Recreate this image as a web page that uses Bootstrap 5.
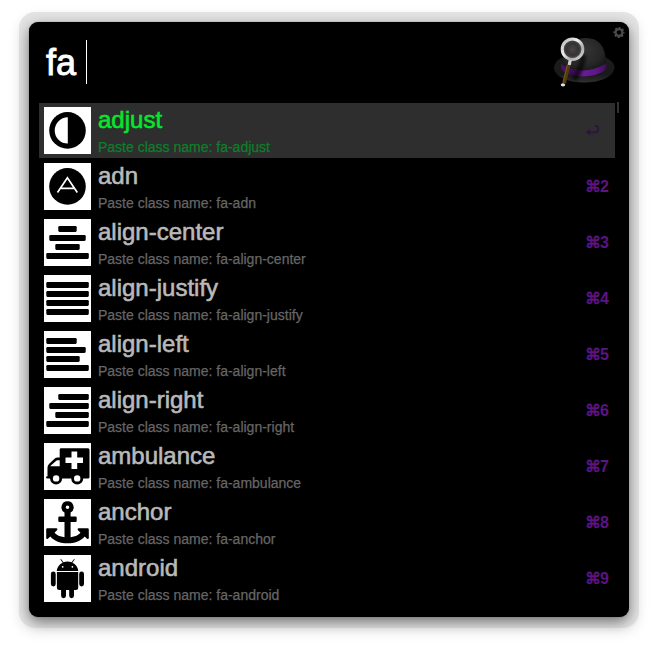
<!DOCTYPE html>
<html lang="en">
<head>
<meta charset="utf-8">
<meta name="viewport" content="width=device-width, initial-scale=1">
<title>Launcher</title>
<link href="https://cdn.jsdelivr.net/npm/bootstrap@5.3.0/dist/css/bootstrap.min.css" rel="stylesheet">
<style>
body{background:#fff;font-family:"Liberation Sans",Arial,sans-serif;padding:12px 16px 0 19px;height:651px;overflow:hidden}
.frame{width:620px;height:616px;padding:10px;border-radius:16px;background:#e4e4e4;box-shadow:0 4px 14px rgba(0,0,0,.07)}
.launcher{width:600px;height:595px;border-radius:9px;background:#000;box-shadow:0 0 1px #555,0 5px 14px rgba(0,0,0,.5);padding:0 14px 0 10px}
.query{height:81px;padding:18px 0 0 7px}
.query-text{font-size:36px;line-height:46px;color:#fff;white-space:pre;-webkit-text-stroke:.9px #fff}
.caret{width:1px;height:44px;background:#fff}
.hat{left:516px;top:3px}
.gear{left:584px;top:4px}
.scroll-thumb{left:588px;top:80px;width:2px;height:11px;background:#333}
.result{height:55px;margin-bottom:1px;padding:0 6px 0 5px;color:#b9b9b9}
.tile{width:47px;height:47px;background:#fff;flex:none}
.tile svg{display:block}
.result-text{padding:3px 0 0 7px}
.result-title{font-size:24px;line-height:28px;-webkit-text-stroke:.6px}
.result-sub{font-size:14px;line-height:18px;margin-top:4px;color:#666;-webkit-text-stroke:.25px}
.result.active{background:#2e2e2e;color:#05e62d}
.active .result-sub{color:#0c8029}
.key{font-size:16px;line-height:20px;color:#5c1483}
.cmd{font-family:"DejaVu Sans",sans-serif;font-size:16px;font-weight:400;-webkit-text-stroke:.7px;margin-right:-1px}
</style>
<script src="https://cdn.jsdelivr.net/npm/bootstrap@5.3.0/dist/js/bootstrap.bundle.min.js"></script>
</head>
<body>
<main class="frame">
<div class="launcher position-relative">
  <div class="query d-flex align-items-start">
    <span class="query-text">fa </span><span class="caret"></span>
    <svg class="hat position-absolute" width="80" height="70" viewBox="0 0 80 70">
      <defs>
        <radialGradient id="crown" cx=".45" cy=".35" r=".7"><stop offset="0" stop-color="#363636"/><stop offset=".65" stop-color="#262626"/><stop offset="1" stop-color="#111"/></radialGradient>
        <linearGradient id="brim" x2="0" y2="1"><stop offset="0" stop-color="#1d1d1d"/><stop offset=".7" stop-color="#191919"/><stop offset="1" stop-color="#303030"/></linearGradient>
        <linearGradient id="band"><stop offset="0" stop-color="#4b126c"/><stop offset=".25" stop-color="#3a0d55"/><stop offset=".5" stop-color="#6b1c98"/><stop offset=".8" stop-color="#5b1784"/><stop offset="1" stop-color="#3b0c57"/></linearGradient>
        <radialGradient id="lens"><stop offset="0" stop-color="#4a4547"/><stop offset=".6" stop-color="#343233"/><stop offset="1" stop-color="#5a5a5a"/></radialGradient>
        <linearGradient id="rim" x2="1" y2="1"><stop offset="0" stop-color="#b5b5b5"/><stop offset=".4" stop-color="#eee"/><stop offset=".7" stop-color="#aaa"/><stop offset="1" stop-color="#ddd"/></linearGradient>
        <filter id="soft" x="-50%" y="-50%" width="200%" height="200%"><feGaussianBlur stdDeviation="1.5"/></filter>
      </defs>
      <path d="M9 43C9 37 15 33 21 31H57C65 34 70 38 69.500 43C68 53 53 57.500 39 57.500S10 53 9 43Z" fill="url(#brim)"/>
      <path d="M18 43C17 28 23 13 41 13C54 13 60 22 60.500 33L61 43C51 50 29 50 18 43Z" fill="url(#crown)"/>
      <path d="M16 39Q38 52 61 38.500L61.500 43C55 54 22 54 16.500 44Z" fill="url(#band)"/>
      <path d="M38 30C39 40 32 49 29 55" stroke="#000" stroke-width="6" fill="none" opacity=".6" filter="url(#soft)"/>
      <circle cx="27.500" cy="24.200" r="10.300" fill="url(#lens)" stroke="url(#rim)" stroke-width="3"/>
      <path d="M25.300 35L24.200 40" stroke="#d0d0d0" stroke-width="3.200"/>
      <path d="M23.600 40L19.200 58" stroke="#523a0e" stroke-width="3.800"/>
      <path d="M22.400 40L18 58" stroke="#8b6526" stroke-width=".7"/>
      <ellipse cx="18" cy="59.800" rx="2.200" ry="1.600" fill="#e2e2e2"/>
    </svg>
    <svg class="gear position-absolute" width="12" height="13" viewBox="0 0 12 13">
      <circle cx="6" cy="6.500" r="3.400" fill="none" stroke="#4c4c4c" stroke-width="2.200"/>
      <circle cx="6" cy="6.500" r="4.800" fill="none" stroke="#4c4c4c" stroke-width="1.600" stroke-dasharray="2 1.770" stroke-dashoffset="1"/>
    </svg>
    <span class="scroll-thumb position-absolute"></span>
  </div>
  <div id="results"></div>
</div>
</main>
<script>
const bars = spans => spans.map(([a, b], i) =>
  `<rect x="${a}" y="${7 + 9 * i}" width="${b - a}" height="5.900" rx="1.300"/>`).join('');
const icons = {
  'adjust': '<circle cx="23.500" cy="23.400" r="18.300"/><path d="M23.800 10.300V36.500A13.100 13.100 0 0 1 23.800 10.300Z" fill="#fff"/>',
  'adn': '<circle cx="23.500" cy="23.400" r="18.300"/><path d="M13.500 29.500L23.400 14.800L33.300 29.500M17 25.300H29.800" fill="none" stroke="#fff" stroke-width="1.700"/>',
  'align-center': bars([[14.3, 32.7], [5.3, 41.7], [11.3, 35.7], [2.3, 44.8]]),
  'align-justify': bars([[2.3, 44.8], [2.3, 44.8], [2.3, 44.8], [2.3, 44.8]]),
  'align-left': bars([[2.3, 32.7], [2.3, 41.7], [2.3, 35.7], [2.3, 44.8]]),
  'align-right': bars([[14.3, 44.8], [5.3, 44.8], [11.3, 44.8], [2.3, 44.8]]),
  'ambulance': '<path d="M17 5.200H44Q45.500 5.200 45.500 6.700V34Q45.500 35.500 44 35.500H3.500Q2 35.500 2 34.300Q2 33.500 3.500 33.300V24.500Q3.500 22.500 5 21L10.500 15.700Q11.800 14.500 13.500 14.500H15.700V6.500Q15.700 5.200 17 5.200Z"/><path d="M6.400 23.200H15.700V17.300H13.500Q12.600 17.300 12 17.900L6.800 22.500ZM27.500 8.500H33.200V14.400H39V20.100H33.200V26H27.500V20.100H21.500V14.400H27.500Z" fill="#fff"/><circle cx="12.100" cy="35.400" r="6"/><circle cx="33.200" cy="35.400" r="6"/><circle cx="12.100" cy="35.400" r="3.200" fill="#fff"/><circle cx="33.200" cy="35.400" r="3.200" fill="#fff"/>',
  'anchor': '<path fill-rule="evenodd" d="M23.500 2.300A6 6 0 0 1 26.600 13.500V17.400H31.500Q32.700 17.400 32.700 18.600V21.700Q32.700 22.900 31.500 22.900H26.600V38.200Q33.500 37.200 36.500 33.700L33.800 31Q33.200 29.600 34.700 29.300H43.700Q44.800 29.300 44.800 30.400V39.300Q44.400 40.600 43.100 39.800L40.700 37.500C36.500 42.300 30.500 44.300 23.500 44.300S10.500 42.300 6.300 37.500L3.900 39.800Q2.600 40.600 2.200 39.300V30.400Q2.200 29.300 3.300 29.300H12.300Q13.800 29.600 13.200 31L10.500 33.700Q13.500 37.200 20.500 38.200V22.900H15.500Q14.300 22.900 14.300 21.700V18.600Q14.300 17.400 15.500 17.400H20.500V13.500A6 6 0 0 1 23.500 2.300ZM23.500 6.400A1.800 1.800 0 1 0 23.500 10A1.800 1.800 0 1 0 23.500 6.400Z"/>',
  'android': '<path d="M12.700 16C13 12 15.500 9.200 18.700 7.700L16.300 4.300L17 4L19.500 7.300Q23.500 5.700 27.600 7.300L30.100 4L30.800 4.300L28.400 7.700C31.600 9.200 34 12 34.300 16ZM12.900 17H34.200V32.500Q34.200 35 31.700 35H30V40.800A2.400 2.400 0 0 1 25.200 40.800V35H22V40.800A2.400 2.400 0 0 1 17.100 40.800V35H15.400Q12.900 35 12.900 32.500Z"/><rect x="6.900" y="16.500" width="4.800" height="15" rx="2.400"/><rect x="35.200" y="16.500" width="4.800" height="15" rx="2.400"/><circle cx="18.700" cy="11.800" r=".9" fill="#fff"/><circle cx="28.400" cy="11.800" r=".9" fill="#fff"/>'
};
const returnKey = '<svg class="d-block me-2" width="16" height="13" viewBox="0 0 16 13"><path d="M9.800 1.800H11C14 2 14.200 8.300 10.500 8.300H3" fill="none" stroke="#321041" stroke-width="1.700"/><path d="M1.200 8.300L5 4.800V11.800Z" fill="#321041"/></svg>';
document.getElementById('results').innerHTML = Object.entries(icons).map(([name, art], i) => `
  <div class="result d-flex ${i ? '' : 'active'}">
    <div class="tile mt-1"><svg width="47" height="47" viewBox="0 0 47 47">${art}</svg></div>
    <div class="result-text flex-grow-1">
      <div class="result-title">${name}</div>
      <div class="result-sub">Paste class name: fa-${name}</div>
    </div>
    <div class="key d-flex align-items-center fw-bold">${i ? `<span class="cmd">⌘</span><span>${i + 1}</span>` : returnKey}</div>
  </div>`).join('');
</script>
</body>
</html>
